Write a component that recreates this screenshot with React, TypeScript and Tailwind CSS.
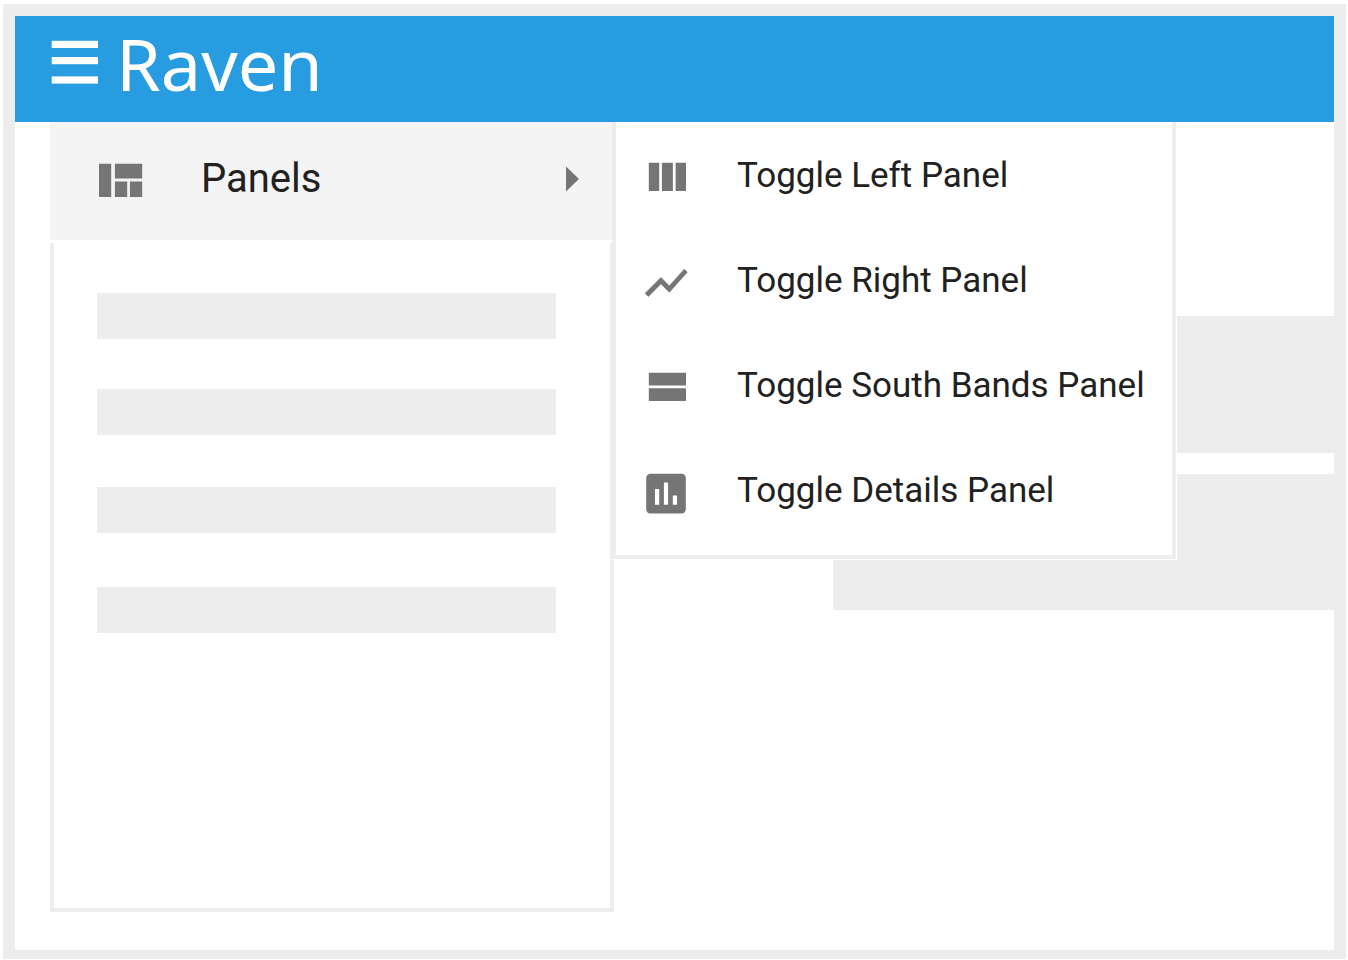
import type { ReactNode } from "react";

const GRAY = "#757575";

function HamburgerIcon() {
  return (
    <svg width="47" height="44" viewBox="0 0 47 44" fill="#fff" aria-hidden="true">
      <rect x="0.7" y="0.8" width="46.3" height="7.2" />
      <rect x="0.7" y="17" width="46.3" height="7.2" />
      <rect x="0.7" y="36.4" width="46.3" height="7.2" />
    </svg>
  );
}

function QuiltIcon() {
  return (
    <svg width="50" height="50" viewBox="0 0 50 50" fill={GRAY} aria-hidden="true">
      <path d="M3 10.7h12.2V44H3zM18.9 10.7h27.3v14.8H18.9zM18.9 28.4h12.3V44H18.9zM33.9 28.4h12.3V44H33.9z" />
    </svg>
  );
}

function ArrowIcon() {
  return (
    <svg width="20" height="30" viewBox="0 0 20 30" fill={GRAY} aria-hidden="true">
      <path d="M4 3.5v25L17 16z" />
    </svg>
  );
}

function MenuIcon({ children }: { children: ReactNode }) {
  return (
    <svg width="50" height="50" viewBox="0 0 50 50" fill={GRAY} className="shrink-0" aria-hidden="true">
      {children}
    </svg>
  );
}

const items = [
  {
    label: "Toggle Left Panel",
    icon: <path d="M7.8 10.7h10.4V39H7.8zM20.9 10.7h11V39h-11zM34.6 10.7H45V39H34.6z" />,
  },
  {
    label: "Toggle Right Panel",
    icon: (
      <path
        transform="scale(2.1)"
        stroke={GRAY}
        strokeWidth="0.35"
        strokeLinejoin="round"
        d="M3.5 18.79l6-6.01 4 4L22 7.22l-1.41-1.41-7.09 7.97-4-4L2 17.29z"
      />
    ),
  },
  {
    label: "Toggle South Bands Panel",
    icon: <path d="M7.8 10.8H45v12.8H7.8zM7.8 26.2H45V39H7.8z" />,
  },
  {
    label: "Toggle Details Panel",
    icon: (
      <>
        <rect x="5.2" y="6.8" width="39.6" height="39.6" rx="4.2" />
        <path fill="#fff" d="M14 22h4.2v15.8H14zM22.9 15.6h4.2v22.2h-4.2zM31.8 28.6H36v9.2h-4.2z" />
      </>
    ),
  },
];

const placeholders = ["", "mt-[50px]", "mt-[52px]", "mt-[54px]"];

export default function App() {
  return (
    <div className="flex min-h-screen flex-col bg-white pt-1 pr-[2px] pb-px pl-[3px] font-[Roboto,sans-serif] text-[#212121]">
      <div className="flex flex-1 flex-col border-12 border-b-9 border-[#ededed]">
        <header className="flex h-[106px] items-start bg-[#289ce0] pl-9">
          <button type="button" aria-label="Menu" className="mt-6">
            <HamburgerIcon />
          </button>
          <h1 className="ml-[18px] font-['Noto_Sans',sans-serif] text-[72px] leading-[95px] text-white">Raven</h1>
        </header>

        <main className="flex flex-1 pb-[38px]">
          <nav className="relative ml-[35px] flex w-[564px] shrink-0 flex-col">
            <button
              type="button"
              aria-haspopup="menu"
              aria-expanded="true"
              className="flex h-[118px] w-full items-center bg-[#f4f4f4] pr-8 pb-[6px] pl-[46px]"
            >
              <QuiltIcon />
              <span className="ml-[55px] flex-1 pt-[2px] text-left text-[40px] leading-[48px]">Panels</span>
              <ArrowIcon />
            </button>
            <div className="mt-[3px] flex-1 border-4 border-t-0 border-[#ededed] pt-[50px] pr-[54px] pl-[43px]">
              {placeholders.map((gap, i) => (
                <div key={i} className={`h-[46px] bg-[#ededed] ${gap}`} />
              ))}
            </div>

            <div className="absolute top-0 left-full -ml-[2px] border-r border-b border-white">
              <ul
                role="menu"
                className="w-[564px] border-4 border-t-0 border-[#ededed] bg-white pt-[3px] pb-[10px]"
              >
                {items.map((item) => (
                  <li key={item.label} role="none">
                    <button
                      type="button"
                      role="menuitem"
                      className="flex h-[105px] w-full items-start pt-[27px] pl-[25px]"
                    >
                      <MenuIcon>{item.icon}</MenuIcon>
                      <span className="ml-[46px] text-[35px] leading-[48px] whitespace-nowrap">{item.label}</span>
                    </button>
                  </li>
                ))}
              </ul>
            </div>
          </nav>

          <section className="ml-[219px] flex flex-1 flex-col gap-[21px] pt-[194px]">
            <div className="h-[137px] bg-[#ededed]" />
            <div className="h-[136px] bg-[#ededed]" />
          </section>
        </main>
      </div>
    </div>
  );
}
